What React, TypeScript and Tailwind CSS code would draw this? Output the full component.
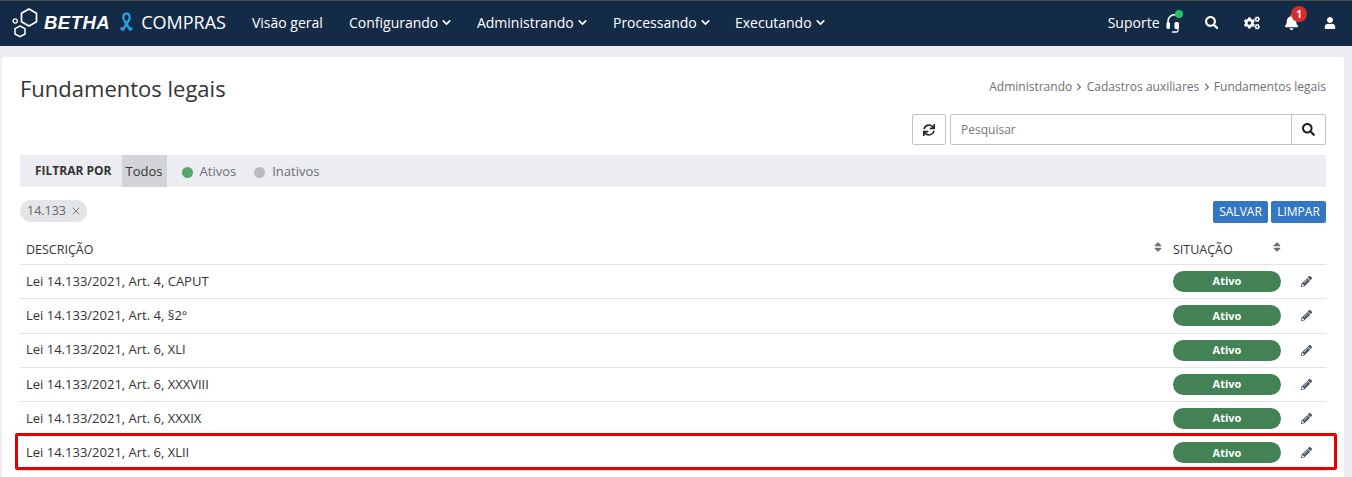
import { FaBell, FaCogs, FaPencilAlt, FaSearch, FaSort, FaSync, FaUser, FaChevronRight } from "react-icons/fa";
import { FiChevronDown, FiX } from "react-icons/fi";

const rows = [
  "Lei 14.133/2021, Art. 4, CAPUT",
  "Lei 14.133/2021, Art. 4, §2°",
  "Lei 14.133/2021, Art. 6, XLI",
  "Lei 14.133/2021, Art. 6, XXXVIII",
  "Lei 14.133/2021, Art. 6, XXXIX",
  "Lei 14.133/2021, Art. 6, XLII",
];

const menus = [
  { label: "Configurando", width: "w-[128px]" },
  { label: "Administrando", width: "w-[136px]" },
  { label: "Processando", width: "w-[122px]" },
  { label: "Executando", width: "w-[110px]" },
];

function Logo() {
  return (
    <svg width="28" height="30" viewBox="0 0 28 30" fill="none" stroke="#fff" className="shrink-0">
      <path d="M17 1l7.500 4.200v8.600L17 18l-7.500-4.200V5.200z" strokeWidth="1.700" />
      <path d="M8 18l5 2.700V26l-5 2.700L3 26v-5.300z" strokeWidth="1.500" />
      <circle cx="3.200" cy="13" r="2.100" strokeWidth="1.300" />
    </svg>
  );
}

function Ribbon() {
  return (
    <svg width="15" height="21" viewBox="0 0 15 21" fill="none" stroke="#2a9fe0" strokeWidth="2.400" className="shrink-0">
      <path d="M5 8C3.500 5.500 4.500 1.500 7.500 1.500S11.500 5.500 10 8L4 17.500 1.500 16" />
      <path d="M5 8l6 9.500 2.500-1.500" />
    </svg>
  );
}

function Headset() {
  return (
    <svg width="18" height="21" viewBox="0 0 18 21" fill="none" className="shrink-0">
      <path d="M2 12V9a6.500 6.500 0 0 1 8-6" stroke="#fff" strokeWidth="1.600" />
      <rect x="0.500" y="10" width="3.500" height="7" rx="1.500" fill="#fff" />
      <rect x="8.500" y="10" width="4.500" height="7" rx="1.500" fill="#fff" />
      <path d="M12 17v1.500a1.500 1.500 0 0 1-1.500 1.500H6" stroke="#fff" strokeWidth="1.300" />
    </svg>
  );
}

function Header() {
  return (
    <header className="flex h-[46px] items-center border-t border-[#4a4a4a] bg-[#142b47] pb-[2px] pl-[12px] text-white">
      <Logo />
      <span className="ml-[4px] font-['Liberation_Sans',sans-serif] text-[18.500px] font-bold italic tracking-[0.5px]">BETHA</span>
      <span className="ml-[9px]"><Ribbon /></span>
      <span className="ml-[7px] text-[18px]">COMPRAS</span>
      <nav className="ml-[26px] flex items-center text-[14px]">
        <span className="w-[97px]">Visão geral</span>
        {menus.map((m) => (
          <span key={m.label} className={`flex items-center gap-[2px] ${m.width}`}>
            {m.label}
            <FiChevronDown className="text-[13px]" strokeWidth={3} />
          </span>
        ))}
      </nav>
      <div className="ml-auto flex items-center pr-[16px]">
        <span className="text-[14px]">Suporte</span>
        <span className="relative ml-[6px] block h-[21px] w-[18px]">
          <Headset />
          <span className="absolute -top-[2px] left-[9px] size-[8px] rounded-full bg-[#22c55e]" />
        </span>
        <FaSearch className="ml-[21px] text-[13.500px]" />
        <FaCogs className="ml-[26px] text-[16px]" />
        <span className="relative ml-[24px] block">
          <FaBell className="text-[15px]" />
          <span className="absolute -right-[8px] -top-[9px] flex size-[16px] items-center justify-center rounded-full bg-[#d22f2f] text-[10px] font-bold">1</span>
        </span>
        <FaUser className="ml-[25px] text-[12px]" />
      </div>
    </header>
  );
}

function TableRow({ text }: { text: string }) {
  return (
    <div className="flex h-[34.250px] items-center border-b border-[#e4e4e4] pl-[6px]">
      <span className="flex-1 text-[13px] text-[#333]">{text}</span>
      <span className="flex h-[21px] w-[108px] items-center justify-center rounded-full bg-[#428254] text-[11px] font-bold text-white">Ativo</span>
      <span className="flex w-[45px] justify-center pl-[5px]">
        <FaPencilAlt className="text-[11px] text-[#4b5563]" />
      </span>
    </div>
  );
}

export default function App() {
  return (
    <div className="relative h-[477px] overflow-hidden bg-[#ebedf1] font-['Open_Sans',sans-serif]">
      <Header />
      <main className="ml-[2px] mr-[8px] mt-[11px] h-[500px] rounded-t-[3px] bg-white px-[18px] pt-[17px]">
        <div className="flex h-[30px] items-start justify-between">
          <h1 className="text-[22px] leading-[28px] text-[#333]">Fundamentos legais</h1>
          <div className="flex items-center gap-[3.250px] pt-[5px] text-[12px] leading-[16px] text-[#6b6f76]">
            <span>Administrando</span>
            <FaChevronRight className="text-[8px]" />
            <span>Cadastros auxiliares</span>
            <FaChevronRight className="text-[8px]" />
            <span>Fundamentos legais</span>
          </div>
        </div>

        <div className="mt-[10px] flex justify-end">
          <button className="flex h-[31px] w-[34px] items-center justify-center rounded-[2px] border border-[#c4c4c4] text-[12px] text-[#222]">
            <FaSync />
          </button>
          <div className="ml-[4px] flex h-[31px] w-[376px] items-center rounded-[2px] border border-[#c4c4c4]">
            <span className="flex-1 pl-[10px] text-[12px] text-[#777]">Pesquisar</span>
            <span className="flex h-full w-[34px] items-center justify-center border-l border-[#c4c4c4] text-[13px] text-[#222]">
              <FaSearch />
            </span>
          </div>
        </div>

        <div className="mt-[10px] flex h-[32px] items-center bg-[#ebedf1] text-[13px]">
          <span className="ml-[15px] text-[12px] font-bold text-[#333]">FILTRAR POR</span>
          <span className="ml-[10px] flex h-full w-[45px] items-center justify-center bg-[#d2d4d8] pt-[2px] text-[#333]">Todos</span>
          <span className="ml-[15px] mt-[2px] size-[11px] rounded-full bg-[#55a56c]" />
          <span className="ml-[7px] mt-[2px] text-[#6b6f76]">Ativos</span>
          <span className="ml-[18px] mt-[2px] size-[11px] rounded-full bg-[#bcbcbc]" />
          <span className="ml-[7px] mt-[2px] text-[#6b6f76]">Inativos</span>
        </div>

        <div className="mt-[13px] flex h-[23px] items-start justify-between">
          <span className="flex h-[22px] w-[67px] items-center gap-[4px] rounded-full bg-[#e4e5e8] pl-[7px] text-[12.500px] text-[#666]">
            14.133
            <FiX className="text-[12px] text-[#777]" />
          </span>
          <div className="mt-[1px] flex gap-[3px] text-[12px] text-white">
            <span className="flex h-[22px] w-[55px] items-center justify-center rounded-[2px] bg-[#3376c3]">SALVAR</span>
            <span className="flex h-[22px] w-[55px] items-center justify-center rounded-[2px] bg-[#3376c3]">LIMPAR</span>
          </div>
        </div>

        <div className="mt-[10px] flex h-[32px] items-center border-b border-[#e4e4e4] pl-[6px] pt-[3px] text-[12.500px] text-[#333]">
          <span className="flex-1">DESCRIÇÃO</span>
          <FaSort className="mb-[7px] text-[12px] text-[#6b6f76]" />
          <span className="ml-[9px] w-[98px]">SITUAÇÃO</span>
          <FaSort className="mb-[7px] text-[12px] text-[#6b6f76]" />
          <span className="w-[43px]" />
        </div>
        {rows.map((r) => (
          <TableRow key={r} text={r} />
        ))}
        {/* next row is only just visible at the fold: the top of its pill */}
        <div className="flex justify-end pr-[45px] pt-[6px]">
          <span className="h-[21px] w-[108px] rounded-full bg-[#428254]" />
        </div>
      </main>
      <div className="absolute left-[15px] top-[433px] h-[37px] w-[1322px] rounded-[2px] border-[3px] border-[#e60000]" />
    </div>
  );
}
